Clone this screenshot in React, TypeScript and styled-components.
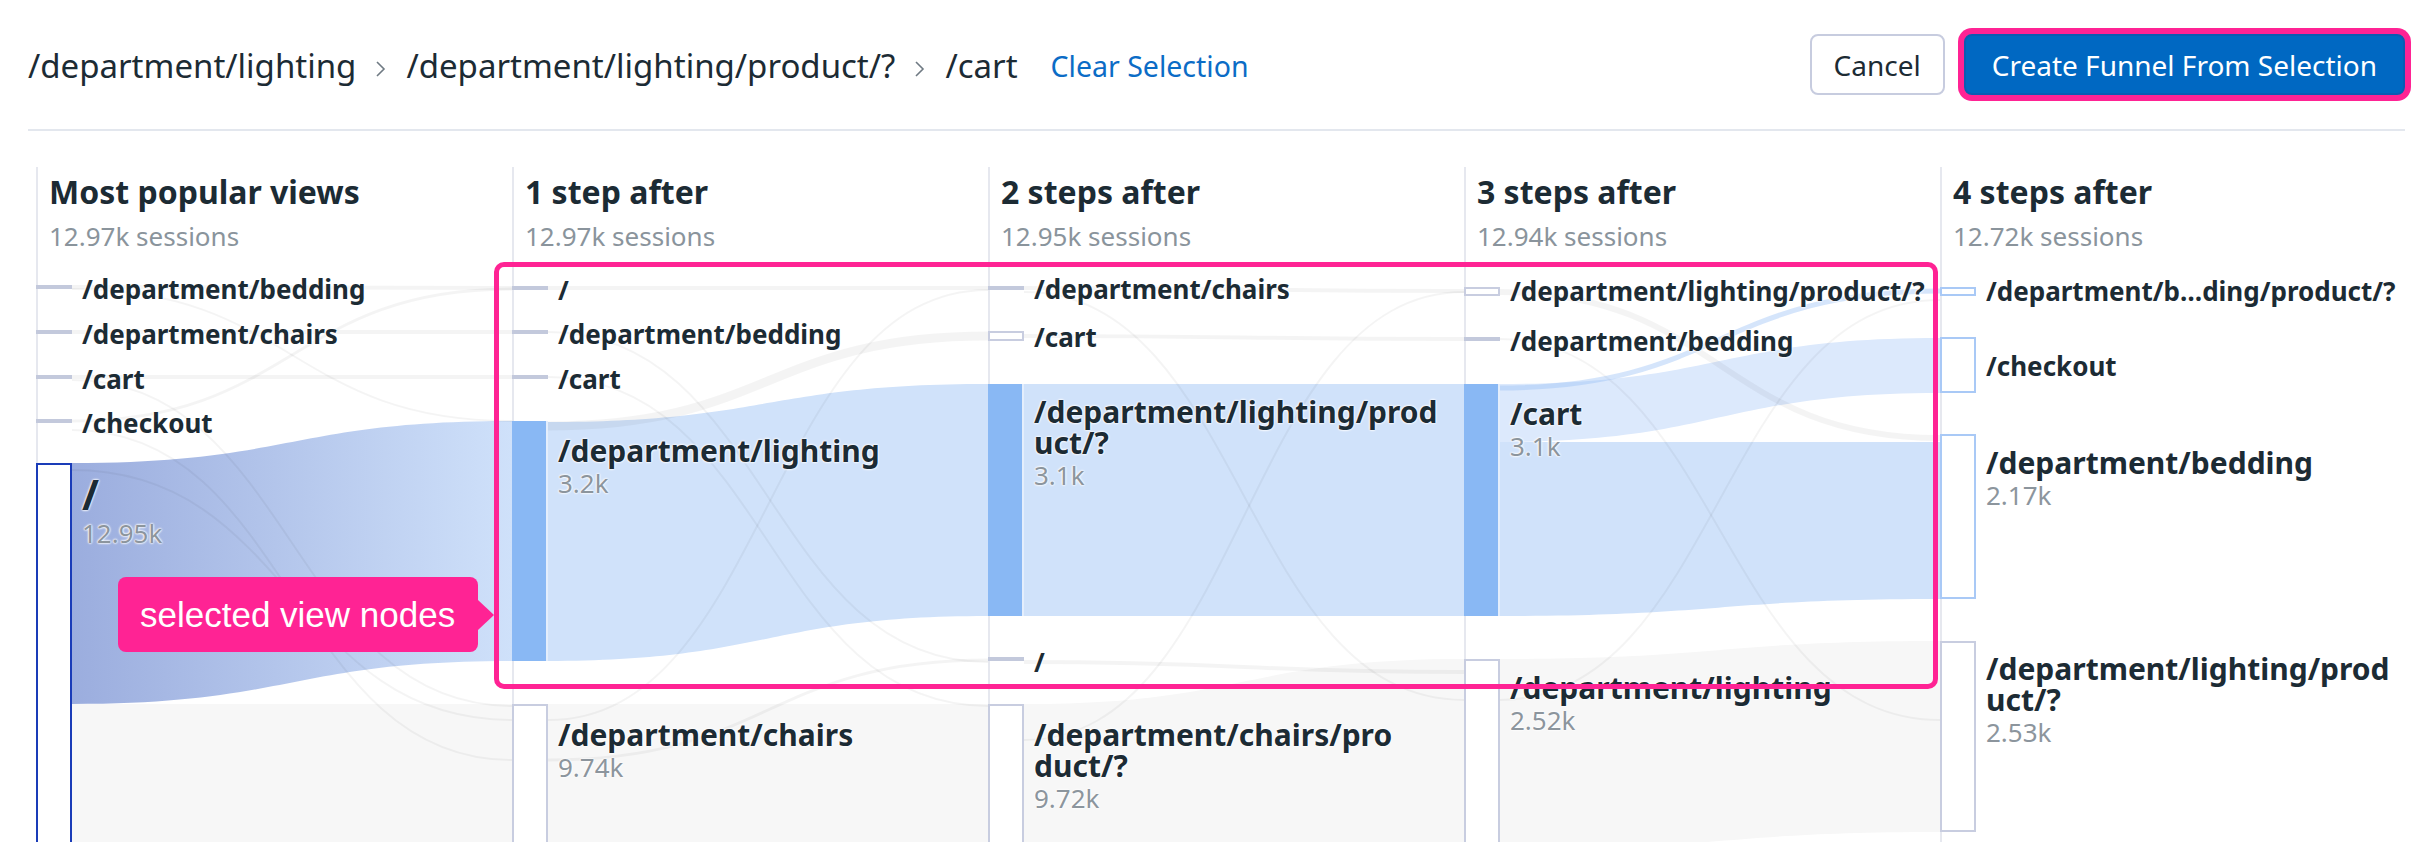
import React from "react";
import styled, { createGlobalStyle, css } from "styled-components";

const TOP = 167;
const LEFT = 36;
const COL_W = 476;

const GlobalStyle = createGlobalStyle`
  html, body { margin: 0; padding: 0; background: #ffffff; overflow: hidden; }
  body { font-family: "Noto Sans", "DejaVu Sans", sans-serif; color: #1c2b34; }
  * { box-sizing: border-box; }
`;

const Page = styled.div`
  width: 2432px;
  height: 842px;
  overflow: hidden;
  padding: 0 27px 0 28px;
`;

const Header = styled.header`
  height: 131px;
  display: flex;
  align-items: center;
  justify-content: space-between;
  border-bottom: 2px solid #e3e7ee;
`;

const Breadcrumb = styled.nav`
  display: flex;
  align-items: center;
  gap: 19px;
  font-size: 33px;
  color: #1c2b34;
  padding-top: 2px;
`;

const Crumb = styled.span`
  white-space: nowrap;
`;

const Chevron = styled.svg`
  width: 12px;
  height: 16px;
  margin-top: 6px;
  flex: none;
`;

const ClearLink = styled.a`
  font-size: 28.5px;
  color: #0b6cc6;
  margin-left: 14px;
  text-decoration: none;
  cursor: pointer;
`;

const Actions = styled.div`
  display: flex;
  align-items: center;
  gap: 19px;
`;

const Button = styled.button<{ $primary?: boolean }>`
  height: 61px;
  border-radius: 8px;
  font-family: "Noto Sans", "DejaVu Sans", sans-serif;
  font-size: 28px;
  cursor: pointer;
  ${(p) =>
    p.$primary
      ? css`
          padding: 0 26px;
          background: #0068c2;
          color: #ffffff;
          border: 2px solid #0a5cb3;
          box-shadow: 0 0 0 6px #ff2394;
        `
      : css`
          padding: 0 22px;
          background: #ffffff;
          color: #1c2b34;
          border: 2px solid #c7ccdf;
        `}
`;

const Chart = styled.div`
  position: relative;
  margin: 36px 0 0 8px;
  width: ${COL_W * 5}px;
  height: 700px;
  overflow: hidden;
`;

const Flows = styled.svg`
  position: absolute;
  left: 0;
  top: 0;
  width: ${COL_W * 5}px;
  height: 700px;
  z-index: 0;
`;

const Columns = styled.div`
  position: relative;
  z-index: 1;
  display: flex;
  height: 100%;
`;

const Column = styled.section`
  position: relative;
  flex: none;
  width: ${COL_W}px;
  height: 100%;
  &::before {
    content: "";
    position: absolute;
    left: 0;
    top: 0;
    bottom: 0;
    width: 2px;
    background: #e6e8ef;
  }
`;

const ColumnHeader = styled.div`
  padding: 5px 0 0 13px;
`;

const Title = styled.h2`
  margin: 0;
  font-size: 32px;
  line-height: 40px;
  font-weight: 700;
  color: #1c2b34;
  white-space: nowrap;
`;

const Sessions = styled.div`
  margin-top: 6px;
  font-size: 26px;
  line-height: 36px;
  color: #8a949c;
`;

type Kind = "bar" | "outline" | "outlineBlue" | "selected" | "root";

const Node = styled.div<{ $kind: Kind }>`
  position: absolute;
  left: 0;
  width: 36px;
  ${(p) =>
    p.$kind === "bar" &&
    css`
      background: #c3c9dc;
    `}
  ${(p) =>
    p.$kind === "outline" &&
    css`
      background: #ffffff;
      border: 2px solid #c8cde0;
    `}
  ${(p) =>
    p.$kind === "outlineBlue" &&
    css`
      background: #ffffff;
      border: 2px solid #a9c9f6;
    `}
  ${(p) =>
    p.$kind === "selected" &&
    css`
      background: #89b8f4;
      border-right: 2px solid #e4eefc;
    `}
  ${(p) =>
    p.$kind === "root" &&
    css`
      background: #ffffff;
      border: 2px solid #1a3cb8;
    `}
`;

const Label = styled.div<{ $big?: boolean }>`
  position: absolute;
  left: 46px;
  white-space: nowrap;
  font-weight: 700;
  color: #1c2b34;
  font-size: ${(p) => (p.$big ? 30 : 26)}px;
  line-height: ${(p) => (p.$big ? 31 : 30)}px;
  text-shadow: 0 0 2px #ffffff, 0 0 2px #ffffff, 0 0 3px #ffffff;
`;

const LabelLine = styled.div<{ $huge?: boolean }>`
  ${(p) =>
    p.$huge &&
    css`
      font-size: 41px;
      line-height: 44px;
    `}
`;

const Count = styled.div`
  margin-top: 1px;
  font-weight: 400;
  font-size: 26px;
  line-height: 32px;
  color: #8c959d;
`;

const SelectionBox = styled.div`
  position: absolute;
  z-index: 3;
  left: ${494 - LEFT}px;
  top: ${262 - TOP}px;
  width: 1444px;
  height: 427px;
  border: 5px solid #ff2394;
  border-radius: 10px;
  pointer-events: none;
`;

const Callout = styled.div`
  position: absolute;
  z-index: 3;
  left: ${118 - LEFT}px;
  top: ${577 - TOP}px;
  width: 360px;
  height: 75px;
  padding-left: 22px;
  display: flex;
  align-items: center;
  background: #ff2394;
  border-radius: 8px;
  color: #ffffff;
  font-family: "Liberation Sans", Arial, sans-serif;
  font-size: 35px;
  white-space: nowrap;
  &::after {
    content: "";
    position: absolute;
    right: -16px;
    top: 23px;
    border-left: 16px solid #ff2394;
    border-top: 15px solid transparent;
    border-bottom: 15px solid transparent;
  }
`;

type NodeData = {
  kind: Kind;
  y: number;
  h: number;
  label: string[];
  ly: number;
  count?: string;
  huge?: boolean;
};

type ColumnData = { title: string; sessions: string; nodes: NodeData[] };

const columns: ColumnData[] = [
  {
    title: "Most popular views",
    sessions: "12.97k sessions",
    nodes: [
      { kind: "bar", y: 285, h: 4, label: ["/department/bedding"], ly: 289 },
      { kind: "bar", y: 330, h: 4, label: ["/department/chairs"], ly: 334 },
      { kind: "bar", y: 375, h: 4, label: ["/cart"], ly: 379 },
      { kind: "bar", y: 419, h: 4, label: ["/checkout"], ly: 423 },
      { kind: "root", y: 463, h: 500, label: ["/"], ly: 494, count: "12.95k", huge: true },
    ],
  },
  {
    title: "1 step after",
    sessions: "12.97k sessions",
    nodes: [
      { kind: "bar", y: 286, h: 4, label: ["/"], ly: 290 },
      { kind: "bar", y: 330, h: 4, label: ["/department/bedding"], ly: 334 },
      { kind: "bar", y: 375, h: 4, label: ["/cart"], ly: 379 },
      { kind: "selected", y: 421, h: 240, label: ["/department/lighting"], ly: 450, count: "3.2k" },
      { kind: "outline", y: 704, h: 300, label: ["/department/chairs"], ly: 734, count: "9.74k" },
    ],
  },
  {
    title: "2 steps after",
    sessions: "12.95k sessions",
    nodes: [
      { kind: "bar", y: 286, h: 4, label: ["/department/chairs"], ly: 289 },
      { kind: "outline", y: 331, h: 10, label: ["/cart"], ly: 337 },
      { kind: "selected", y: 384, h: 232, label: ["/department/lighting/prod", "uct/?"], ly: 411, count: "3.1k" },
      { kind: "bar", y: 657, h: 4, label: ["/"], ly: 662 },
      { kind: "outline", y: 704, h: 300, label: ["/department/chairs/pro", "duct/?"], ly: 734, count: "9.72k" },
    ],
  },
  {
    title: "3 steps after",
    sessions: "12.94k sessions",
    nodes: [
      { kind: "outline", y: 287, h: 9, label: ["/department/lighting/product/?"], ly: 291 },
      { kind: "bar", y: 337, h: 4, label: ["/department/bedding"], ly: 341 },
      { kind: "selected", y: 384, h: 232, label: ["/cart"], ly: 413, count: "3.1k" },
      { kind: "outline", y: 659, h: 300, label: ["/department/lighting"], ly: 687, count: "2.52k" },
    ],
  },
  {
    title: "4 steps after",
    sessions: "12.72k sessions",
    nodes: [
      { kind: "outlineBlue", y: 287, h: 9, label: ["/department/b\u2026ding/product/?"], ly: 291 },
      { kind: "outlineBlue", y: 337, h: 56, label: ["/checkout"], ly: 366 },
      { kind: "outlineBlue", y: 434, h: 165, label: ["/department/bedding"], ly: 462, count: "2.17k" },
      { kind: "outline", y: 641, h: 191, label: ["/department/lighting/prod", "uct/?"], ly: 668, count: "2.53k" },
    ],
  },
];

// band between two nodes, in page coordinates
const band = (x0: number, a0: number, b0: number, x1: number, a1: number, b1: number) => {
  const m = (x0 + x1) / 2;
  return `M${x0} ${a0} C${m} ${a0} ${m} ${a1} ${x1} ${a1} L${x1} ${b1} C${m} ${b1} ${m} ${b0} ${x0} ${b0} Z`;
};

const curve = (x0: number, y0: number, x1: number, y1: number) => {
  const m = (x0 + x1) / 2;
  return `M${x0} ${y0} C${m} ${y0} ${m} ${y1} ${x1} ${y1}`;
};

type Band = { d: string; fill: string };

const bands: Band[] = [
  { d: band(72, 704, 900, 512, 704, 900), fill: "#f7f7f7" },
  { d: band(548, 704, 900, 988, 704, 900), fill: "#f7f7f7" },
  { d: band(1024, 704, 900, 1464, 659, 860), fill: "#f7f7f7" },
  { d: band(1499, 659, 850, 1940, 641, 832), fill: "#f7f7f7" },
  { d: band(72, 463, 704, 512, 421, 661), fill: "url(#rootFlow)" },
  { d: band(548, 422, 661, 988, 384, 616), fill: "#d0e2fa" },
  { d: band(1024, 384, 616, 1464, 384, 616), fill: "#d0e2fa" },
  { d: band(1499, 384, 442, 1940, 338, 393), fill: "#dce9fc" },
  { d: band(1499, 442, 616, 1940, 442, 599), fill: "#d0e2fa" },
];

type Faint = { x0: number; y0: number; x1: number; y1: number; w: number; c?: string };

const faint: Faint[] = [
  { x0: 72, y0: 287, x1: 512, y1: 288, w: 4 },
  { x0: 72, y0: 332, x1: 512, y1: 332, w: 4 },
  { x0: 72, y0: 377, x1: 512, y1: 377, w: 4 },
  { x0: 72, y0: 421, x1: 512, y1: 289, w: 3 },
  { x0: 72, y0: 289, x1: 512, y1: 421, w: 2 },
  { x0: 72, y0: 430, x1: 512, y1: 760, w: 2 },
  { x0: 72, y0: 470, x1: 512, y1: 720, w: 2 },
  { x0: 72, y0: 380, x1: 512, y1: 706, w: 2 },
  { x0: 548, y0: 288, x1: 988, y1: 288, w: 4 },
  { x0: 548, y0: 426, x1: 988, y1: 336, w: 9 },
  { x0: 548, y0: 332, x1: 988, y1: 662, w: 2 },
  { x0: 548, y0: 377, x1: 988, y1: 706, w: 2 },
  { x0: 548, y0: 720, x1: 988, y1: 290, w: 2 },
  { x0: 548, y0: 760, x1: 988, y1: 660, w: 3 },
  { x0: 1024, y0: 288, x1: 1464, y1: 291, w: 4 },
  { x0: 1024, y0: 336, x1: 1464, y1: 339, w: 4 },
  { x0: 1024, y0: 662, x1: 1464, y1: 672, w: 4 },
  { x0: 1024, y0: 740, x1: 1464, y1: 292, w: 2 },
  { x0: 1024, y0: 292, x1: 1464, y1: 700, w: 2 },
  { x0: 1499, y0: 292, x1: 1940, y1: 438, w: 6 },
  { x0: 1499, y0: 339, x1: 1940, y1: 720, w: 2 },
  { x0: 1499, y0: 700, x1: 1940, y1: 300, w: 2 },
  { x0: 1499, y0: 388, x1: 1940, y1: 291, w: 5, c: "rgba(150, 190, 245, 0.4)" },
];

const ChevronIcon = () => (
  <Chevron viewBox="0 0 12 16" aria-hidden>
    <polyline points="2,1 9,8 2,15" fill="none" stroke="#6f7a83" strokeWidth="1.6" />
  </Chevron>
);

const SankeyNode = ({ n }: { n: NodeData }) => {
  const big = Boolean(n.count);
  const lh = n.huge ? 44 : big ? 31 : 30;
  return (
    <>
      <Node $kind={n.kind} style={{ top: n.y - TOP, height: n.h }} />
      <Label $big={big} style={{ top: n.ly - TOP - lh / 2 }}>
        {n.label.map((line) => (
          <LabelLine key={line} $huge={n.huge}>
            {line}
          </LabelLine>
        ))}
        {n.count && <Count>{n.count}</Count>}
      </Label>
    </>
  );
};

export default function App() {
  return (
    <>
      <GlobalStyle />
      <Page>
        <Header>
          <Breadcrumb>
            <Crumb>/department/lighting</Crumb>
            <ChevronIcon />
            <Crumb>/department/lighting/product/?</Crumb>
            <ChevronIcon />
            <Crumb>/cart</Crumb>
            <ClearLink>Clear Selection</ClearLink>
          </Breadcrumb>
          <Actions>
            <Button>Cancel</Button>
            <Button $primary>Create Funnel From Selection</Button>
          </Actions>
        </Header>
        <Chart>
          <Flows viewBox={`${LEFT} ${TOP} ${COL_W * 5} 700`}>
            <defs>
              <linearGradient id="rootFlow" x1="0" y1="0" x2="1" y2="0">
                <stop offset="0" stopColor="#9badde" />
                <stop offset="1" stopColor="#cfe1fa" />
              </linearGradient>
            </defs>
            {bands.map((b, i) => (
              <path key={i} d={b.d} fill={b.fill} />
            ))}
            {faint.map((f, i) => (
              <path
                key={i}
                d={curve(f.x0, f.y0, f.x1, f.y1)}
                fill="none"
                stroke={f.c ?? "rgba(0, 0, 0, 0.045)"}
                strokeWidth={f.w}
              />
            ))}
          </Flows>
          <Columns>
            {columns.map((c) => (
              <Column key={c.title}>
                <ColumnHeader>
                  <Title>{c.title}</Title>
                  <Sessions>{c.sessions}</Sessions>
                </ColumnHeader>
                {c.nodes.map((n) => (
                  <SankeyNode key={n.label.join("")} n={n} />
                ))}
              </Column>
            ))}
          </Columns>
          <SelectionBox />
          <Callout>selected view nodes</Callout>
        </Chart>
      </Page>
    </>
  );
}
